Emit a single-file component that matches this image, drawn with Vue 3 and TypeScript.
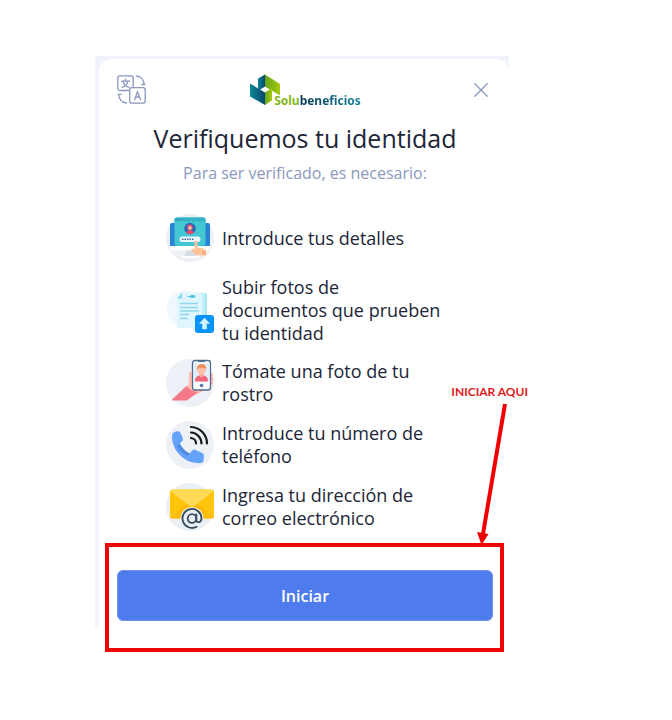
<script setup lang="ts">
type StepIcon = 'details' | 'documents' | 'selfie' | 'phone' | 'email'

interface Step {
  icon: StepIcon
  text: string
}

const steps: Step[] = [
  { icon: 'details', text: 'Introduce tus detalles' },
  { icon: 'documents', text: 'Subir fotos de documentos que prueben tu identidad' },
  { icon: 'selfie', text: 'Tómate una foto de tu rostro' },
  { icon: 'phone', text: 'Introduce tu número de teléfono' },
  { icon: 'email', text: 'Ingresa tu dirección de correo electrónico' },
]
</script>

<template>
  <main class="page">
    <div class="frame">
      <section class="card">
        <header class="header">
          <button class="icon-button" type="button" aria-label="Cambiar idioma">
            <svg width="30" height="30" viewBox="0 0 30 30" fill="none" stroke="#8b97bd" stroke-width="1.3" stroke-linecap="round" stroke-linejoin="round">
              <path d="M12.500 15.500H3a2.200 2.200 0 0 1-2.200-2.200V3A2.200 2.200 0 0 1 3 .8h11A2.200 2.200 0 0 1 16.200 3v9.500" />
              <rect x="12.700" y="12.700" width="15.500" height="15.500" rx="2.200" />
              <path d="M4.500 6.200h8M8.500 4.200v2M11 6.300c-.8 3-3 5-6 6M6 6.300c.8 3 3 5 6 6" />
              <path d="M17.500 24.700l3-8 3 8M18.600 22h3.800" />
              <path d="M19.500 1c4.500.5 7.500 4 7.700 8.500M27.800 9.500h-3" />
              <path d="M9.500 28C5 27.500 1.800 24 1.600 19.300M1.200 19.300h3" />
            </svg>
          </button>

          <div class="brand">
            <svg width="32" height="32" viewBox="0 0 32 32" aria-hidden="true">
              <defs>
                <linearGradient id="brand-blue" x1="0" x2="1">
                  <stop offset="0" stop-color="#0c8796" />
                  <stop offset="1" stop-color="#09476b" />
                </linearGradient>
                <linearGradient id="brand-green" x1="1" x2="0">
                  <stop offset="0" stop-color="#a8c90d" />
                  <stop offset="1" stop-color="#63a51d" />
                </linearGradient>
              </defs>
              <path d="M9 4.500L16 .5v12L9 17z" fill="url(#brand-blue)" />
              <path d="M16 .5l15 9.500v11.500l-15-9z" fill="url(#brand-green)" />
              <path d="M1 9.500l15 9V31L1 22.500z" fill="url(#brand-blue)" />
              <path d="M16 18.500l7-4.500v12.500L16 31z" fill="url(#brand-green)" />
            </svg>
            <span class="brand-name"><span class="brand-solu">Solu</span><span class="brand-rest">beneficios</span></span>
          </div>

          <button class="icon-button close" type="button" aria-label="Cerrar">
            <svg width="14" height="14" viewBox="0 0 14 14" fill="none" stroke="#8b97bd" stroke-width="1.3" stroke-linecap="round">
              <path d="M.8.8l12.400 12.400M13.200.8L.8 13.200" />
            </svg>
          </button>
        </header>

        <h1 class="title">Verifiquemos tu identidad</h1>
        <p class="subtitle">Para ser verificado, es necesario:</p>

        <ul class="steps">
          <li v-for="step in steps" :key="step.icon" class="step">
            <svg v-if="step.icon === 'details'" class="step-icon" viewBox="0 0 48 48" aria-hidden="true">
              <circle cx="24" cy="24" r="24" fill="#edf1f5" />
              <rect x="4" y="9" width="40" height="27" rx="2" fill="#2683d5" />
              <path d="M4 32h40v2.500a2 2 0 0 1-2 2H6a2 2 0 0 1-2-2z" fill="#fff" />
              <path d="M20 36.500h9l1.500 6H18.500z" fill="#d5dce4" />
              <rect x="15" y="42" width="18" height="2" rx="1" fill="#fff" />
              <rect x="8.500" y="3.500" width="31" height="28.500" rx="2" fill="#43c7d2" />
              <path d="M8.500 7.500v-2a2 2 0 0 1 2-2h27a2 2 0 0 1 2 2v2z" fill="#36b4c5" />
              <path d="M10.500 5.500h1.300m1.200 0h1.300m1.200 0h1.300" stroke="#287ead" stroke-width="1.200" />
              <circle cx="24" cy="14.500" r="5.700" fill="#3165b5" />
              <path d="M20 18.500q4-5 8 0a5.700 5.700 0 0 1-8 0z" fill="#ee4862" />
              <circle cx="24" cy="13.300" r="2.700" fill="#f05068" />
              <circle cx="24" cy="14" r="1.700" fill="#ffd0ae" />
              <rect x="13.500" y="22.500" width="21" height="5.500" rx="2.700" fill="#e9f7ff" />
              <path d="M16 25.200h12" stroke="#45699d" stroke-width="1.500" stroke-dasharray="1.500 1" />
              <path d="M28.500 28.500c0-2.200 3-2.200 3 0v5l5 .7c2 .3 3.500 1.500 3.500 3.500v3.500H29.500l-4-4.500c-1-1.500.8-2.500 2-1.500l1 .7z" fill="#ffc39b" />
              <path d="M36 41.200v-4l4-.5v4.500z" fill="#ffad83" />
            </svg>

            <svg v-else-if="step.icon === 'documents'" class="step-icon" viewBox="0 0 48 48" aria-hidden="true">
              <circle cx="19" cy="22" r="18.500" fill="#f0f8ff" />
              <path d="M34 6h5q2 0 2 2v31q0 2-2 2H17z" fill="#a6e4f7" />
              <path d="M34 5.500h2.500q2 0 2 2V40H34z" fill="#c4f0fb" />
              <path d="M16 5.500h18q2 0 2 2V39q0 2-2 2H13q-2 0-2-2V11.500z" fill="#dff6fe" />
              <path d="M16 5.500v6h-5z" fill="#8ad9f4" />
              <path d="M21.500 9.500h8M25 8.700h3v1.600h-3z" stroke="#55c4dc" stroke-width="1.200" fill="none" />
              <path d="M14 16.500h18M14 20.500h18M14 24h19M14 27.500h9M14 31.500h8" stroke="#91d7ef" stroke-width="1.300" />
              <rect x="29" y="28" width="19" height="18" rx="3" fill="#0793fc" />
              <path d="M38.500 31l5 5.500h-3V42h-4v-5.500h-3z" fill="#d2f6ff" stroke="#d2f6ff" stroke-width=".6" stroke-linejoin="round" />
            </svg>

            <svg v-else-if="step.icon === 'selfie'" class="step-icon" viewBox="0 0 48 48" aria-hidden="true">
              <circle cx="24" cy="24" r="24" fill="#edf0f6" />
              <path d="M23 14c0-2 3-2 3 0v10h13v5q-1 4-6 5l-6 3-7-9q3-2 3-7z" fill="#ffbeb0" />
              <path d="M44 14q3 0 3 2t-2 2q3 .5 2.500 2.500T45 22q2.500 1 2 2.700T44 26z" fill="#ffb4a7" />
              <path d="M6 40.500L20.500 27q3 5 11.500 6l-11 8.500H7q-2 0-1-1z" fill="#f37888" />
              <rect x="26.500" y="1.500" width="18" height="29.500" rx="2.500" fill="#f8fbff" stroke="#506b91" stroke-width="1.300" />
              <path d="M32 2h7v1h-7z" fill="#506b91" />
              <rect x="28" y="4.500" width="15" height="18" fill="#e1edf8" />
              <path d="M29 22.500q0-6.500 6.500-6.500t6.500 6.500z" fill="#f2667a" />
              <path d="M33.500 13h4v4q-2 2.500-4 0z" fill="#ffad98" />
              <circle cx="35.500" cy="11" r="4" fill="#ffc0a9" />
              <path d="M31 11.500q-1-6 5-6.500 5 .5 4 6.500l-1-2.500-6-.5z" fill="#ef8b55" />
              <circle cx="35.500" cy="26.500" r="1.800" fill="#597bad" />
            </svg>

            <svg v-else-if="step.icon === 'phone'" class="step-icon" viewBox="0 0 48 48" aria-hidden="true">
              <circle cx="24" cy="24" r="24" fill="#edf0f5" />
              <path d="M6 15q0-3 3-4.200l3-.5q2 0 2.700 2l2 5q.8 2-1 3.500l-2 1.700q3.500 7 10 10l2.500-3q1.300-1.500 3-.7l7 3.200q2 1 1.800 3l-.5 4.500q-.5 2.800-3.500 2.800C16 42.500 5.500 27 6 15z" fill="#65a2fa" />
              <path d="M13.700 22.500q3.500 7 10 10l-2 2.500q-8-4-11-10z" fill="#508be2" />
              <g fill="none" stroke="#17191d" stroke-width="2.200" stroke-linecap="round">
                <path d="M25 6a16.500 16.500 0 0 1 16 16.500" />
                <path d="M25 11.500a11 11 0 0 1 10.500 11" />
                <path d="M25 17a5.500 5.500 0 0 1 5 5.500" />
              </g>
            </svg>

            <svg v-else class="step-icon" viewBox="0 0 48 48" aria-hidden="true">
              <circle cx="24" cy="24" r="24" fill="#eaf0f4" />
              <rect x="4" y="6.500" width="44" height="29" rx="2.500" fill="#ffc40b" />
              <path d="M4.500 34.500L20 21h12l15.500 13.500q-.5 1-2 1H6.500q-1.500 0-2-1z" fill="#ffba0a" />
              <path d="M4.300 8q.3-1.500 2.200-1.500h39q1.800 0 2.200 1.500L29 22.500q-3 2-6 0z" fill="#ffdb55" />
              <circle cx="26" cy="35.500" r="11.500" fill="#eaf0f4" />
              <g fill="none" stroke="#34495b" stroke-width="1.800" stroke-linecap="round">
                <circle cx="26" cy="35.500" r="4.300" />
                <path d="M30.300 31.500v5.500c0 3.200 5.200 3 5.200-1.500a9.500 9.500 0 1 0-5 8.300" />
              </g>
            </svg>
            <span>{{ step.text }}</span>
          </li>
        </ul>

        <footer class="footer">
          <button class="start" type="button">Iniciar</button>
          <div class="callout">
            <span class="callout-label">INICIAR AQUI</span>
            <svg class="callout-arrow" width="32" height="142" viewBox="0 0 32 142" aria-hidden="true">
              <path d="M28 1L6 131" stroke="#f00000" stroke-width="4" />
              <path d="M0 129l11.500 2L4.500 142z" fill="#f00000" />
            </svg>
          </div>
        </footer>
      </section>
    </div>
  </main>
</template>

<style>
body {
  margin: 0;
  background: #fff;
}
</style>

<style scoped>
.page {
  padding: 56px 163px 40px 95px;
  font-family: "Open Sans", "Noto Sans", sans-serif;
  color: #202638;
}

.frame {
  padding: 3px 0 0 4px;
  background: #f0f2fc;
}

.card {
  padding: 14px 16px 6px 18px;
  border-radius: 12px 12px 0 0;
  background: #fff;
}

.header {
  display: grid;
  grid-template-columns: 1fr auto 1fr;
  align-items: center;
  height: 34px;
}

.icon-button {
  display: flex;
  justify-self: start;
  padding: 0;
  border: 0;
  background: none;
  cursor: pointer;
}

.close {
  justify-self: end;
  padding: 5px;
}

.brand {
  display: flex;
  align-items: flex-end;
}

.brand-name {
  margin-left: -7px;
  font-family: "Noto Sans", sans-serif;
  font-size: 12px;
  line-height: 10px;
  font-weight: 700;
}

.brand-solu {
  color: #84b819;
}

.brand-rest {
  background: linear-gradient(90deg, #073753, #1485a0);
  background-clip: text;
  color: transparent;
}

.title {
  margin: 13px 0 0;
  font-size: 25px;
  line-height: 36px;
  font-weight: 400;
  text-align: center;
}

.subtitle {
  margin: 5px 0 0;
  color: #8b98bd;
  font-size: 16px;
  line-height: 24px;
  text-align: center;
}

.steps {
  display: flex;
  flex-direction: column;
  gap: 14px;
  max-width: 278px;
  margin: 29px auto 0;
  padding: 0;
  list-style: none;
}

.step {
  display: flex;
  align-items: center;
  gap: 8px;
  min-height: 48px;
  font-size: 18px;
  line-height: 23px;
}

.step-icon {
  flex: none;
  width: 48px;
  height: 48px;
}

.footer {
  position: relative;
  margin-top: 39px;
}

.start {
  display: block;
  width: 100%;
  height: 51px;
  border: 1px solid #6f92ef;
  border-radius: 6px;
  background: #4f7ced;
  color: #fff;
  font: 600 16px/24px "Open Sans", sans-serif;
  cursor: pointer;
}

.callout {
  position: absolute;
  inset: -27px -11px -31px -12px;
  border: 4px solid #ee0505;
  pointer-events: none;
}

.callout-label {
  position: absolute;
  right: -28px;
  bottom: 248px;
  color: #e01b1b;
  font: 700 12px/16px Lato, sans-serif;
  white-space: nowrap;
}

.callout-arrow {
  position: absolute;
  right: -9px;
  bottom: 103px;
}
</style>
